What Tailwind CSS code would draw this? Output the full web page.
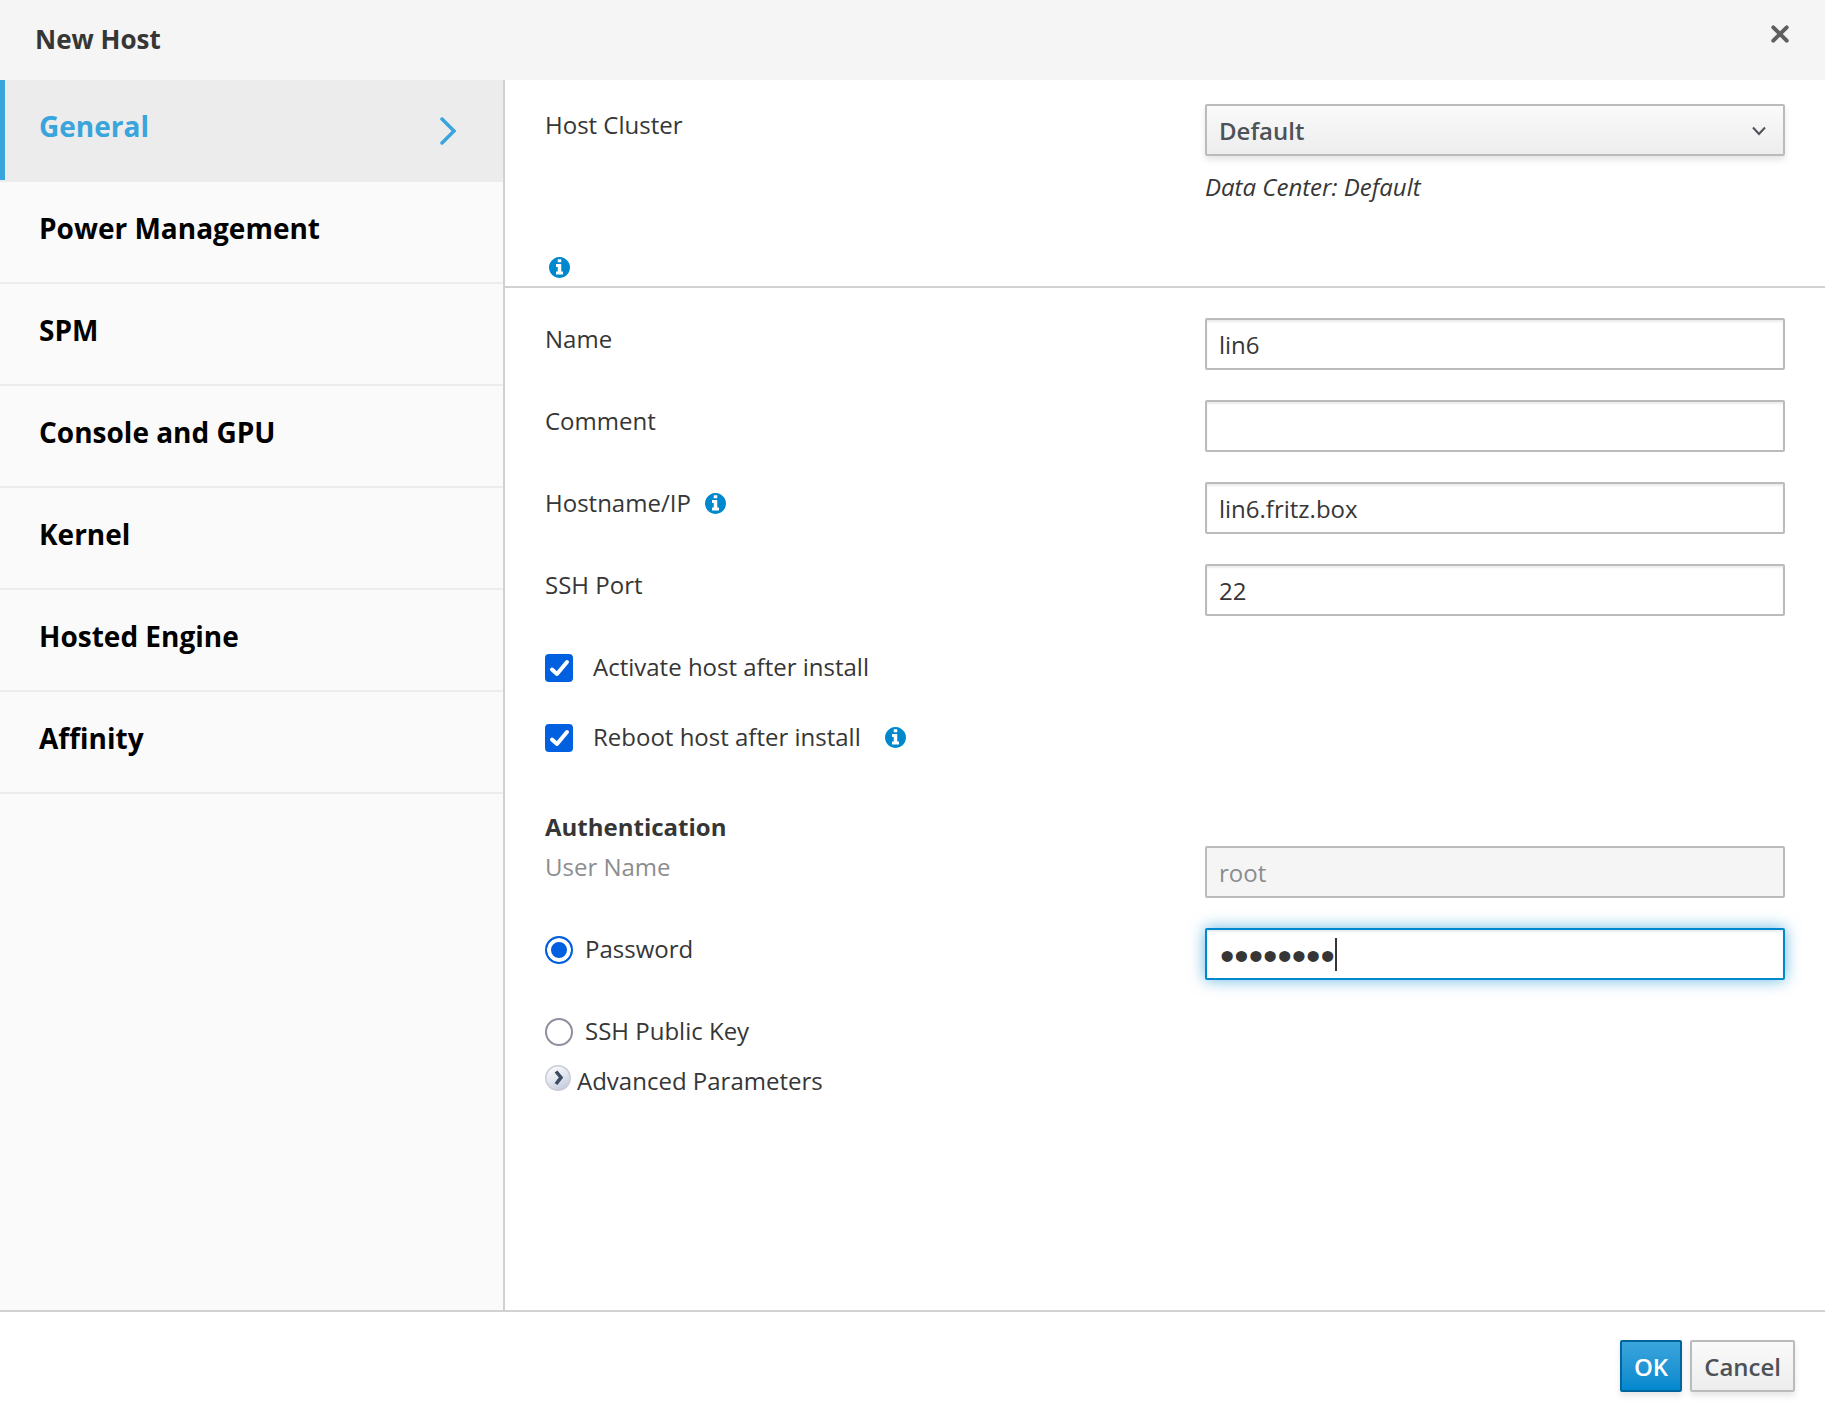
<!DOCTYPE html>
<html lang="en">
<head>
  <meta charset="UTF-8" />
  <meta name="viewport" content="width=device-width, initial-scale=1" />
  <title>New Host</title>
  <script src="https://cdn.jsdelivr.net/npm/@tailwindcss/browser@4"></script>
</head>
<body class="min-h-screen flex flex-col bg-white font-['Open_Sans',sans-serif] text-[24px] leading-[42px] text-[#363636]">
  <!-- Shared info icon -->
  <svg class="hidden" aria-hidden="true">
    <symbol id="info" viewBox="0 0 1536 1536">
      <path fill="currentColor" d="M1024 1248v-160q0-14-9-23t-23-9h-96V544q0-14-9-23t-23-9H544q-14 0-23 9t-9 23v160q0 14 9 23t23 9h96v320h-96q-14 0-23 9t-9 23v160q0 14 9 23t23 9h448q14 0 23-9t9-23zM896 352V192q0-14-9-23t-23-9H672q-14 0-23 9t-9 23v160q0 14 9 23t23 9h192q14 0 23-9t9-23zm640 416q0 209-103 385.500T1153.500 1433 768 1536t-385.500-103T103 1153.500 0 768t103-385.500T382.500 103 768 0t385.500 103T1433 382.500 1536 768z" />
    </symbol>
  </svg>

  <header class="h-20 flex justify-between bg-[#f5f5f5] pl-[35px] pr-9">
    <h1 class="pt-[18px] text-[26px] font-bold">New Host</h1>
    <button type="button" aria-label="Close" class="self-start pt-6 text-[#5f5f5f]">
      <svg class="w-[18px] h-5" viewBox="0 0 18 20" fill="none" stroke="currentColor" stroke-width="4" stroke-linecap="round">
        <path d="M2.300 3.300l13.400 13.400M15.700 3.300L2.300 16.700" />
      </svg>
    </button>
  </header>

  <div class="flex-grow flex">
    <!-- Tabs -->
    <nav class="w-[505px] shrink-0 bg-[#fafafa] border-r-2 border-[#d1d1d1] text-[28px] font-bold text-black">
      <a href="#general" class="h-[102px] flex justify-between bg-[#ececec] text-[#39a5dc] border-b-2 border-[#ececec]">
        <span class="flex"><span class="w-[5px] bg-[#39a5dc]"></span><span class="pl-[34px] pt-[25px]">General</span></span>
        <svg class="w-4 h-7 mt-[37px] mr-[47px]" viewBox="0 0 16 28" fill="none" stroke="currentColor" stroke-width="3.500" stroke-linecap="round">
          <path d="M2 2l12 12L2 26" stroke-linejoin="miter" />
        </svg>
      </a>
      <a href="#power" class="block h-[102px] pl-[39px] pt-[25px] border-b-2 border-[#ececec]">Power Management</a>
      <a href="#spm" class="block h-[102px] pl-[39px] pt-[25px] border-b-2 border-[#ececec]">SPM</a>
      <a href="#console" class="block h-[102px] pl-[39px] pt-[25px] border-b-2 border-[#ececec]">Console and GPU</a>
      <a href="#kernel" class="block h-[102px] pl-[39px] pt-[25px] border-b-2 border-[#ececec]">Kernel</a>
      <a href="#engine" class="block h-[102px] pl-[39px] pt-[25px] border-b-2 border-[#ececec]">Hosted Engine</a>
      <a href="#affinity" class="block h-[102px] pl-[39px] pt-[25px] border-b-2 border-[#ececec]">Affinity</a>
    </nav>

    <!-- General tab -->
    <main class="flex-grow">
      <form id="hostForm">
        <section class="h-52 pt-6 pb-2 flex flex-col justify-between border-b-2 border-[#d1d1d1]">
          <div class="grid grid-cols-2">
            <div class="px-10"><label for="cluster">Host Cluster</label></div>
            <div class="px-10">
              <div class="relative">
                <select id="cluster" class="appearance-none block w-full h-[52px] pl-3 pr-12 pt-px rounded-[2px] border-2 border-[#bbb] bg-linear-to-b from-[#fafafa] to-[#ededed] font-semibold text-[#4d5258] shadow-[0_4px_6px_rgba(3,3,3,0.1)]">
                  <option>Default</option>
                </select>
                <svg class="absolute right-[18px] top-[22px] w-4 h-[10px] text-[#4d5258] pointer-events-none" viewBox="0 0 16 10" fill="none" stroke="currentColor" stroke-width="2">
                  <path d="M2 1.500l6 6.500 6-6.500" />
                </svg>
              </div>
              <p class="mt-2.5 italic">Data Center: Default</p>
            </div>
          </div>
          <button type="button" aria-label="Host cluster information" class="self-start ml-11 text-[#0088ce]"><svg class="w-[21px] h-[21px]"><use href="#info" /></svg></button>
        </section>

        <section class="pt-[30px] flex flex-col gap-[30px]">
          <div class="grid grid-cols-2">
            <div class="px-10"><label for="name">Name</label></div>
            <div class="px-10"><input id="name" type="text" value="lin6" class="block w-full h-[52px] px-3 pt-px rounded-[2px] border-2 border-[#bbb] bg-white shadow-[inset_0_2px_2px_rgba(3,3,3,0.075)]" /></div>
          </div>
          <div class="grid grid-cols-2">
            <div class="px-10"><label for="comment">Comment</label></div>
            <div class="px-10"><input id="comment" type="text" class="block w-full h-[52px] px-3 pt-px rounded-[2px] border-2 border-[#bbb] bg-white shadow-[inset_0_2px_2px_rgba(3,3,3,0.075)]" /></div>
          </div>
          <div class="grid grid-cols-2">
            <div class="px-10 flex items-start gap-3.5">
              <label for="hostname">Hostname/IP</label>
              <button type="button" aria-label="Hostname information" class="h-[42px] text-[#0088ce]"><svg class="w-[21px] h-[21px]"><use href="#info" /></svg></button>
            </div>
            <div class="px-10"><input id="hostname" type="text" value="lin6.fritz.box" class="block w-full h-[52px] px-3 pt-px rounded-[2px] border-2 border-[#bbb] bg-white shadow-[inset_0_2px_2px_rgba(3,3,3,0.075)]" /></div>
          </div>
          <div class="grid grid-cols-2">
            <div class="px-10"><label for="port">SSH Port</label></div>
            <div class="px-10"><input id="port" type="text" value="22" class="block w-full h-[52px] px-3 pt-px rounded-[2px] border-2 border-[#bbb] bg-white shadow-[inset_0_2px_2px_rgba(3,3,3,0.075)]" /></div>
          </div>
        </section>

        <section class="mt-[30px] px-10 flex flex-col gap-7">
          <div class="flex items-center">
            <label class="flex items-center gap-5">
              <span class="grid mt-0.5">
                <input type="checkbox" checked class="peer col-start-1 row-start-1 appearance-none w-7 h-7 rounded-[4px] border-2 border-[#8f8f9d] checked:border-[#0060df] checked:bg-[#0060df]" />
                <svg class="col-start-1 row-start-1 w-7 h-7 invisible peer-checked:visible pointer-events-none" viewBox="0 0 28 28" fill="none" stroke="white" stroke-width="4" stroke-linecap="round" stroke-linejoin="round"><path d="M7 15.500l5 4.500L22 8" /></svg>
              </span>
              Activate host after install
            </label>
          </div>
          <div class="flex items-center gap-6">
            <label class="flex items-center gap-5">
              <span class="grid mt-0.5">
                <input type="checkbox" checked class="peer col-start-1 row-start-1 appearance-none w-7 h-7 rounded-[4px] border-2 border-[#8f8f9d] checked:border-[#0060df] checked:bg-[#0060df]" />
                <svg class="col-start-1 row-start-1 w-7 h-7 invisible peer-checked:visible pointer-events-none" viewBox="0 0 28 28" fill="none" stroke="white" stroke-width="4" stroke-linecap="round" stroke-linejoin="round"><path d="M7 15.500l5 4.500L22 8" /></svg>
              </span>
              Reboot host after install
            </label>
            <button type="button" aria-label="Reboot information" class="text-[#0088ce]"><svg class="w-[21px] h-[21px]"><use href="#info" /></svg></button>
          </div>
        </section>

        <section class="mt-12">
          <h2 class="h-10 px-10 font-bold">Authentication</h2>
          <div class="flex flex-col gap-[30px]">
            <div class="grid grid-cols-2">
              <div class="px-10 text-[#8b8d8f]"><label for="user">User Name</label></div>
              <div class="px-10"><input id="user" type="text" value="root" disabled class="block w-full h-[52px] px-3 pt-px rounded-[2px] border-2 border-[#bbb] bg-[#f5f5f5] text-[#8b8d8f]" /></div>
            </div>
            <div class="grid grid-cols-2">
              <div class="px-10 flex items-start">
                <label class="flex items-center gap-3">
                  <input type="radio" name="auth" checked class="appearance-none w-7 h-7 mt-0.5 rounded-full border-2 border-[#8f8f9d] checked:border-[#0060df] checked:bg-[#0060df] checked:shadow-[inset_0_0_0_4px_white]" />
                  Password
                </label>
              </div>
              <div class="px-10">
                <div class="relative">
                  <input id="password" type="password" value="password" aria-label="Password" class="block w-full h-[52px] px-[13px] pt-1 rounded-[2px] border-2 border-[#0088ce] bg-white font-['Liberation_Sans',sans-serif] text-[41px] outline-none shadow-[inset_0_2px_2px_rgba(3,3,3,0.075),0_0_16px_rgba(0,136,206,0.6)] caret-transparent" />
                  <span class="absolute left-[130px] top-[10px] w-[2px] h-[33px] bg-[#363636]"></span>
                </div>
              </div>
            </div>
            <div class="px-10 flex">
              <label class="flex items-center gap-3">
                <input type="radio" name="auth" class="appearance-none w-7 h-7 mt-0.5 rounded-full border-2 border-[#8f8f9d] checked:border-[#0060df] checked:bg-[#0060df] checked:shadow-[inset_0_0_0_4px_white]" />
                SSH Public Key
              </label>
            </div>
          </div>
          <button type="button" class="mt-2 ml-10 flex gap-1.5">
            <svg class="w-[26px] h-[26px] mt-[5px]" viewBox="0 0 26 26">
              <defs>
                <linearGradient id="ball" x1="0.200" y1="0" x2="0.700" y2="1">
                  <stop offset="0" stop-color="#fafbfd" />
                  <stop offset="0.500" stop-color="#e3e7f0" />
                  <stop offset="1" stop-color="#c3c9da" />
                </linearGradient>
              </defs>
              <circle cx="13" cy="13" r="12.200" fill="url(#ball)" stroke="#c9ccd6" stroke-width="1.500" />
              <path d="M11 6.500l5 6-5 6.500" fill="none" stroke="#3d4a60" stroke-width="3.500" />
            </svg>
            Advanced Parameters
          </button>
        </section>
      </form>
    </main>
  </div>

  <footer class="flex justify-end gap-2 border-t-2 border-[#d1d1d1] pt-7 pb-[31px] pr-[30px]">
    <button type="submit" form="hostForm" class="h-[52px] px-3 pt-px rounded-[2px] border-2 border-[#00659c] bg-linear-to-b from-[#39a5dc] to-[#0088ce] font-semibold text-white shadow-[0_4px_6px_rgba(3,3,3,0.1)]">OK</button>
    <button type="button" class="h-[52px] px-3 pt-px rounded-[2px] border-2 border-[#bbb] bg-linear-to-b from-[#fafafa] to-[#ededed] font-semibold text-[#4d5258] shadow-[0_4px_6px_rgba(3,3,3,0.1)]">Cancel</button>
  </footer>
</body>
</html>
